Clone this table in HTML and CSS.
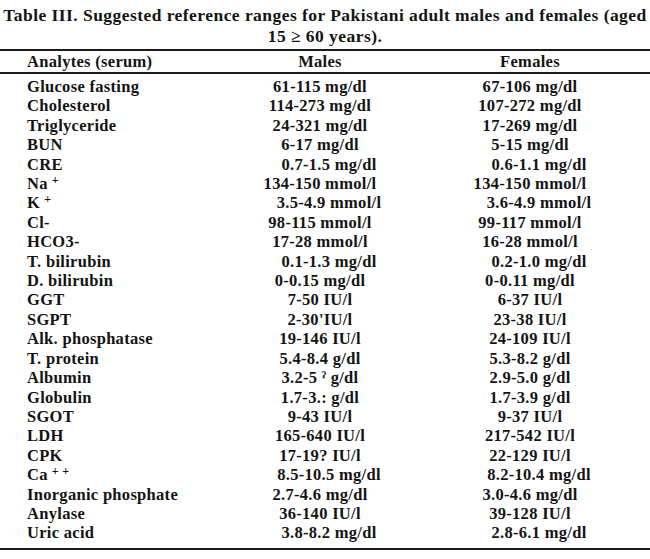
FILE: index.html
```html
<!DOCTYPE html>
<html>
<head>
<meta charset="utf-8">
<link rel="stylesheet" href="styles.css">
</head>
<body>
<div class="page">
  <h1 class="title">Table III. Suggested reference ranges for Pakistani adult males and females (aged<br>15 ≥ 60 years).</h1>
  <div class="table">
    <div class="row head"><span>Analytes (serum)</span><span>Males</span><span>Females</span></div>
    <div class="body">
      <div class="row"><span>Glucose fasting</span><span>61-115 mg/dl</span><span>67-106 mg/dl</span></div>
      <div class="row"><span>Cholesterol</span><span>114-273 mg/dl</span><span>107-272 mg/dl</span></div>
      <div class="row"><span>Triglyceride</span><span>24-321 mg/dl</span><span>17-269 mg/dl</span></div>
      <div class="row"><span>BUN</span><span>6-17 mg/dl</span><span>5-15 mg/dl</span></div>
      <div class="row"><span>CRE</span><span class="r">0.7-1.5 mg/dl</span><span class="r">0.6-1.1 mg/dl</span></div>
      <div class="row"><span class="ion">Na<sup>+</sup></span><span>134-150 mmol/l</span><span>134-150 mmol/l</span></div>
      <div class="row"><span class="ion">K<sup>+</sup></span><span class="r">3.5-4.9 mmol/l</span><span class="r">3.6-4.9 mmol/l</span></div>
      <div class="row"><span>Cl-</span><span>98-115 mmol/l</span><span>99-117 mmol/l</span></div>
      <div class="row"><span>HCO3-</span><span>17-28 mmol/l</span><span>16-28 mmol/l</span></div>
      <div class="row"><span>T. bilirubin</span><span class="r">0.1-1.3 mg/dl</span><span class="r">0.2-1.0 mg/dl</span></div>
      <div class="row"><span>D. bilirubin</span><span>0-0.15 mg/dl</span><span>0-0.11 mg/dl</span></div>
      <div class="row"><span>GGT</span><span>7-50 IU/l</span><span>6-37 IU/l</span></div>
      <div class="row"><span>SGPT</span><span>2-30'IU/l</span><span>23-38 IU/l</span></div>
      <div class="row"><span>Alk. phosphatase</span><span>19-146 IU/l</span><span>24-109 IU/l</span></div>
      <div class="row"><span>T. protein</span><span>5.4-8.4 g/dl</span><span>5.3-8.2 g/dl</span></div>
      <div class="row"><span>Albumin</span><span>3.2-5 ˀ g/dl</span><span>2.9-5.0 g/dl</span></div>
      <div class="row"><span>Globulin</span><span>1.7-3.: g/dl</span><span>1.7-3.9 g/dl</span></div>
      <div class="row"><span>SGOT</span><span>9-43 IU/l</span><span>9-37 IU/l</span></div>
      <div class="row"><span>LDH</span><span>165-640 IU/l</span><span>217-542 IU/l</span></div>
      <div class="row"><span>CPK</span><span>17-19? IU/l</span><span>22-129 IU/l</span></div>
      <div class="row"><span class="ion">Ca<sup>+ +</sup></span><span class="r">8.5-10.5 mg/dl</span><span class="r">8.2-10.4 mg/dl</span></div>
      <div class="row"><span>Inorganic phosphate</span><span>2.7-4.6 mg/dl</span><span>3.0-4.6 mg/dl</span></div>
      <div class="row"><span>Anylase</span><span>36-140 IU/l</span><span>39-128 IU/l</span></div>
      <div class="row"><span>Uric acid</span><span class="r">3.8-8.2 mg/dl</span><span class="r">2.8-6.1 mg/dl</span></div>
    </div>
  </div>
</div>
</body>
</html>
```
FILE: styles.css
```css
html, body {
  margin: 0;
  padding: 0;
  background: #ffffff;
}
.page {
  width: 650px;
  height: 559px;
  font-family: "Liberation Serif", "Times New Roman", serif;
  color: #141414;
  overflow: hidden;
}
.title {
  margin: 0;
  padding-top: 5px;
  height: 44px;
  font-size: 17.5px;
  line-height: 21px;
  font-weight: bold;
  text-align: center;
  letter-spacing: 0.45px;
  white-space: nowrap;
}
.table {
  border-top: 2px solid #1a1a1a;
  border-bottom: 2px solid #1a1a1a;
}
.row {
  display: grid;
  grid-template-columns: 200px 186px 234px;
  padding-left: 27px;
  font-size: 16.5px;
  font-weight: bold;
  line-height: 19.4px;
  letter-spacing: 0.3px;
  white-space: nowrap;
}
.row span:nth-child(2),
.row span:nth-child(3) {
  text-align: center;
}
.row span.r {
  padding-left: 18px;
}
.ion {
  display: flex;
  align-items: flex-start;
}
.head {
  height: 21px;
  line-height: 21px;
  border-bottom: 2px solid #1a1a1a;
}
.body {
  padding-top: 3px;
  padding-bottom: 5px;
}
sup {
  font-size: 12px;
  line-height: 11px;
  margin-left: 4px;
  margin-top: 1px;
}
```
